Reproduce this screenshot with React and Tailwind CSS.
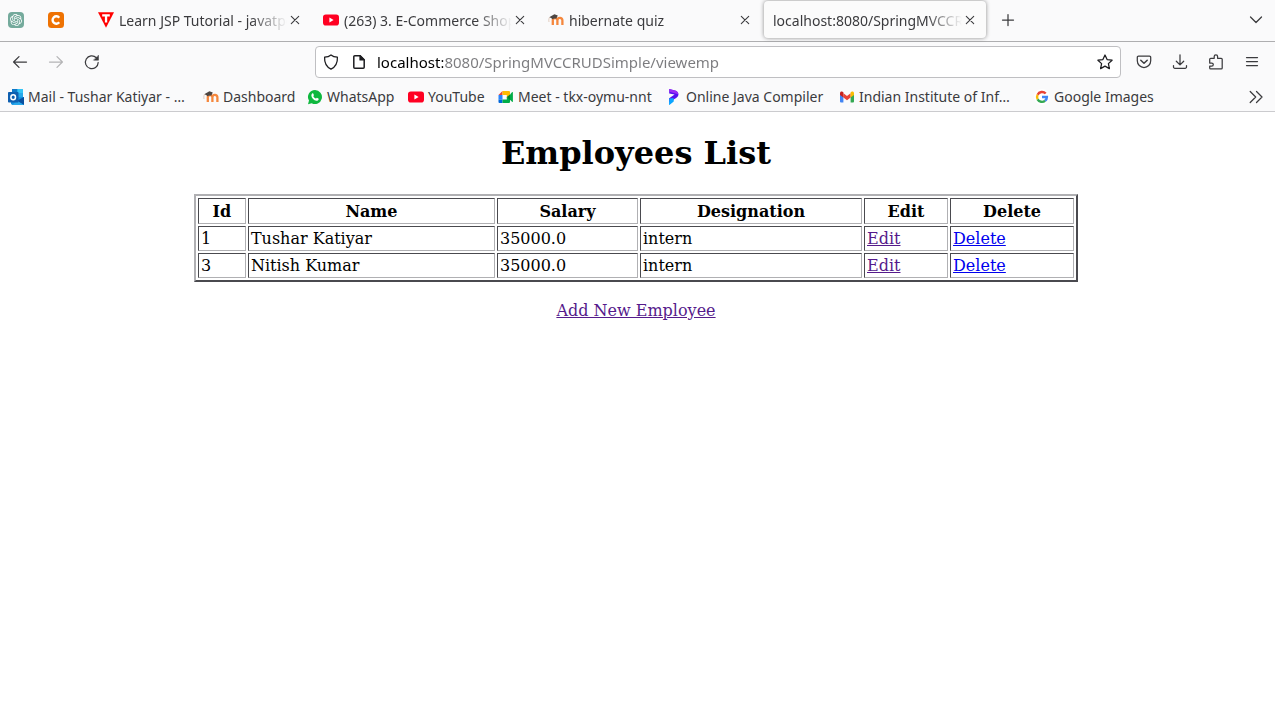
import { SiOpenai } from 'react-icons/si';

function Youtube() {
  return (
    <svg viewBox="0 0 16 16" className="size-4 shrink-0" aria-hidden="true">
      <rect x="0" y="2.5" width="16" height="11" rx="2.8" fill="#ff0022" />
      <path d="M6.4 5.6v4.8L10.6 8z" fill="#fff" />
    </svg>
  );
}

function Moodle() {
  return (
    <svg viewBox="0 0 16 16" className="size-4 shrink-0" aria-hidden="true">
      <path
        d="M4.8 13V8.4a1.9 1.9 0 0 1 4.6-.2V13M9.4 13V8.200a2.500 2.500 0 0 1 5 .2V13"
        fill="none"
        stroke="#f5873d"
        strokeWidth="2.3"
      />
      <path d="M1.2 5.200 6.400 2.200l3.400 1.300-1.600 3.200c-1.300-.5-2.700-.3-3.800.6L3.200 6z" fill="#4d4643" />
      <path d="M1.500 5.300C.7 7 .7 8.600 1 10" fill="none" stroke="#d9b9a5" strokeWidth=".7" />
    </svg>
  );
}

function Tpoint() {
  return (
    <svg viewBox="0 0 16 16" className="size-4 shrink-0" aria-hidden="true">
      <path d="M0 .3h16L8 15.700z" fill="#f00" />
      <path d="M4.200 2.200h7.600v2.200H9.200v6H6.900v-6H4.200z" fill="#fff" />
    </svg>
  );
}

function Outlook() {
  return (
    <svg viewBox="0 0 16 16" className="size-4 shrink-0" aria-hidden="true">
      <rect x="4" y="0" width="11" height="11" fill="#28a8ea" />
      <path d="M4 0h5.500v4H4z" fill="#0f78c8" />
      <path d="M9.500 0H15v4H9.500z" fill="#35c4f5" />
      <path d="M3 8.500 16 8v8H4.500L3 15z" fill="#1490df" />
      <path d="M16 8v8l-7-4.200z" fill="#0a50a0" />
      <path d="M4.500 16H16l-7-4.200z" fill="#28a8ea" />
      <rect x="0" y="3" width="10.500" height="10.500" rx=".8" fill="#0f5fb0" />
      <ellipse cx="5.200" cy="8.200" rx="2.300" ry="2.500" fill="none" stroke="#fff" strokeWidth="1.500" />
    </svg>
  );
}

function Whatsapp() {
  return (
    <svg viewBox="0 0 16 16" className="size-4 shrink-0" aria-hidden="true">
      <path d="M8 1a7 7 0 1 1-3.300 13.200L1 15.200l1-3.600A7 7 0 0 1 8 1z" fill="#0fb83f" />
      <path
        d="M5.700 4.300c.3 0 .5 0 .6.4l.6 1.400c.1.300-.6 1-.6 1.200.6 1.100 1.400 1.900 2.500 2.300.3.100.8-.9 1.100-.8l1.500.7c.4.200.3.600.2 1-.3.900-1.400 1.300-2.200 1.200C6.900 11.400 4.700 9.200 4.400 7c-.1-1.100.4-2.500 1.300-2.700z"
        fill="#fff"
      />
    </svg>
  );
}

function Meet() {
  return (
    <svg viewBox="0 0 16 16" className="size-4 shrink-0" aria-hidden="true">
      <path d="M4.500 2v4H.5z" fill="#ea4335" />
      <path d="M.5 6h4v4.500h-4z" fill="#2684fc" />
      <path d="M.5 10.500h4V14h-3a1 1 0 0 1-1-1z" fill="#0066da" />
      <path d="M4.500 2H11a1 1 0 0 1 1 1v3.500L8.800 9V6H4.500z" fill="#ffba00" />
      <path d="M4.500 10.500h4.300V8L12 9.600V13a1 1 0 0 1-1 1H4.500z" fill="#00ac47" />
      <path d="M8.800 8 12 5.400V11z" fill="#00832d" />
      <path d="m12 5.400 2-2.200c.4-.3.900-.1.900.4v8.800c0 .5-.5.700-.9.400l-2-2.100z" fill="#00ac47" />
    </svg>
  );
}

function Programiz() {
  return (
    <svg viewBox="0 0 16 16" className="size-4 shrink-0" aria-hidden="true">
      <path d="M3.200 9.500 7.500 8.600v4L3.200 16z" fill="#0ba5ff" />
      <path d="M3.200 0 9 1.600c4.400 1.300 4.400 5.600 1.200 7.400L3.200 13V9.300L8.600 5.600 3.200 4.500z" fill="#5510ee" />
      <path d="M3.200 0 9 1.600c2.200.6 3.300 2 3.200 3.600L3.200 2.800z" fill="#9b2cf5" />
      <path d="M3.200 9.500 7.500 9v3.500L3.200 16z" fill="#0ba5ff" />
    </svg>
  );
}

function Gmail() {
  return (
    <svg viewBox="0 0 16 16" className="size-4 shrink-0" aria-hidden="true">
      <path d="M1 4.500 4.400 7v6.500H2a1 1 0 0 1-1-1z" fill="#4285f4" />
      <path d="M15 4.500 11.600 7v6.500H14a1 1 0 0 0 1-1z" fill="#34a853" />
      <path d="M4.400 4.300 8 7l3.600-2.700v4.200L8 11.200 4.400 8.500z" fill="#ea4335" />
      <path d="M1 4.200c0-1.600 1.600-2.200 2.800-1.300l.6.400v5.200L1 6z" fill="#c5221f" />
      <path d="M15 4.200c0-1.600-1.600-2.200-2.800-1.300l-.6.400v5.200L15 6z" fill="#fbbc04" />
    </svg>
  );
}

function Google() {
  return (
    <svg viewBox="0 0 16 16" className="size-4 shrink-0" aria-hidden="true">
      <circle cx="8" cy="8" r="8" fill="#fff" />
      <g fill="none" strokeWidth="2.400">
        <path d="M11.700 4.500A5 5 0 0 0 3.600 5.700" stroke="#ea4335" />
        <path d="M3.600 5.700a5 5 0 0 0 0 4.600" stroke="#fbbc05" />
        <path d="M3.600 10.300a5 5 0 0 0 7.500 1.500" stroke="#34a853" />
        <path d="M11.100 11.800A4.800 4.800 0 0 0 12.900 8H8" stroke="#4285f4" />
      </g>
    </svg>
  );
}

function Line({ children, className = '' }) {
  return (
    <svg
      viewBox="0 0 16 16"
      className={`size-4 shrink-0 ${className}`}
      fill="none"
      stroke="currentColor"
      strokeWidth="1.250"
      strokeLinecap="round"
      strokeLinejoin="round"
      aria-hidden="true"
    >
      {children}
    </svg>
  );
}

function ToolButton({ label, children, className = '' }) {
  return (
    <button type="button" aria-label={label} className={`flex h-8 w-9 items-center justify-center ${className}`}>
      {children}
    </button>
  );
}

const tabs = [
  { title: 'Learn JSP Tutorial - javatpoint', icon: <Tpoint /> },
  { title: '(263) 3. E-Commerce Shopping', icon: <Youtube /> },
  { title: 'hibernate quiz', icon: <Moodle /> },
  { title: 'localhost:8080/SpringMVCCRUD', active: true },
];

const bookmarks = [
  { title: 'Mail - Tushar Katiyar - …', icon: <Outlook />, width: 'w-[163px]' },
  { title: 'Dashboard', icon: <Moodle />, width: 'w-[72px]' },
  { title: 'WhatsApp', icon: <Whatsapp />, width: 'w-[69px]' },
  { title: 'YouTube', icon: <Youtube />, width: 'w-[58px]' },
  { title: 'Meet - tkx-oymu-nnt', icon: <Meet />, width: 'w-[136px]' },
  { title: 'Online Java Compiler', icon: <Programiz />, width: 'w-[141px]' },
  { title: 'Indian Institute of Inf…', icon: <Gmail />, width: 'w-[163px]' },
  { title: 'Google Images', icon: <Google />, width: 'w-[100px]' },
];

const employees = [
  { id: 1, name: 'Tushar Katiyar', salary: '35000.0', designation: 'intern' },
  { id: 3, name: 'Nitish Kumar', salary: '35000.0', designation: 'intern' },
];

const columns = [
  { title: 'Id', width: 'w-[48px]' },
  { title: 'Name', width: 'w-[247px]' },
  { title: 'Salary', width: 'w-[141px]' },
  { title: 'Designation', width: 'w-[222px]' },
  { title: 'Edit', width: 'w-[84px]' },
  { title: 'Delete', width: 'w-[124px]' },
];

const cell = 'border border-t-[#4a4a4f] border-l-[#4a4a4f] border-r-[#b0b0b3] border-b-[#b0b0b3] px-0.5 pb-0.5';

function Tab({ title, icon, active }) {
  return (
    <div className="h-[41px] w-[225px] min-w-0 p-px">
      <div
        className={`mr-px flex h-[37px] items-center rounded pr-2 pl-[9px] ${
          active ? 'bg-[#fbfbfb] shadow-[0_0_4px_rgba(0,0,0,0.45)]' : ''
        }`}
      >
        <button type="button" className="flex min-w-0 flex-1 items-center gap-[5px] text-left">
          {icon}
          <span className="flex-1 overflow-hidden pt-0.5 whitespace-nowrap [mask-image:linear-gradient(to_left,transparent,black_36px)]">
            {title}
          </span>
        </button>
        <button type="button" aria-label={`Close ${title}`} className="flex w-4 justify-center">
          <Line>
            <path d="M4.300 4.300l7.400 7.400M11.700 4.300l-7.400 7.400" strokeWidth="1.100" />
          </Line>
        </button>
      </div>
    </div>
  );
}

export default function App() {
  return (
    <div className="min-h-screen bg-white">
      <header className="bg-[#fafafb] font-['Noto_Sans','Open_Sans',sans-serif] text-sm text-[#3b3b3e]">
        <nav aria-label="Tabs" className="flex h-[42px] border-b border-[#aeaeb0]">
          <button type="button" aria-label="ChatGPT" className="flex h-10 w-10 items-center pl-2">
            <span className="flex size-4 items-center justify-center rounded-sm bg-[#74aa9c] text-white">
              <SiOpenai className="size-3" />
            </span>
          </button>
          <button type="button" aria-label="Codechef" className="mr-2 flex h-10 w-10 items-center pl-2">
            <svg viewBox="0 0 16 16" className="size-4" aria-hidden="true">
              <rect width="16" height="16" rx="3.500" fill="#ee7203" />
              <path d="M11.200 5.700A3.700 3.700 0 1 0 11.200 10.300" fill="none" stroke="#fff" strokeWidth="2.400" />
            </svg>
          </button>
          {tabs.map((tab) => (
            <Tab key={tab.title} {...tab} />
          ))}
          <ToolButton label="New tab" className="ml-0.5 h-10">
            <Line>
              <path d="M8 2.500v11M2.500 8h11" />
            </Line>
          </ToolButton>
          <ToolButton label="List all tabs" className="mr-px ml-auto h-10">
            <Line>
              <path d="m2.500 5 5.500 5.500L13.500 5" />
            </Line>
          </ToolButton>
        </nav>

        <div className="flex h-10 items-center pr-[5px]">
          <div className="flex w-[315px] shrink-0 pl-0.5">
            <ToolButton label="Back">
              <Line>
                <path d="M14.500 8H1.800M7 2.600 1.600 8 7 13.400" />
              </Line>
            </ToolButton>
            <ToolButton label="Forward" className="text-[#b4b4b6]">
              <Line>
                <path d="M1.500 8h12.700M9 2.600 14.400 8 9 13.400" />
              </Line>
            </ToolButton>
            <ToolButton label="Reload">
              <Line>
                <path d="M14.200 8.500A6.400 6.400 0 1 1 12.300 3.700" />
                <path d="M14.500 1.500v4.700H9.800z" fill="currentColor" strokeWidth=".5" />
              </Line>
            </ToolButton>
          </div>
          <div className="flex h-8 flex-1 items-center rounded border border-[#bfbfc2] bg-white px-[7px] text-[#1d1d20]">
            <Line>
              <path d="M8 .9c1.800 1.500 4 2.100 6.400 2.300.3 5.300-1.600 9.500-6.400 11.900C3.200 12.700 1.300 8.500 1.600 3.200 4 3 6.200 2.400 8 .9z" />
            </Line>
            <Line className="ml-3">
              <path d="M3.800 1.700h5.400l4 4v7.600a1 1 0 0 1-1 1H3.800a1 1 0 0 1-1-1V2.700a1 1 0 0 1 1-1z" strokeWidth="1.500" />
              <path d="M9 1.700v4.200h4.200z" fill="currentColor" />
            </Line>
            <input
              aria-label="Address"
              defaultValue="localhost:8080/SpringMVCCRUDSimple/viewemp"
              className="mx-2.5 h-7 min-w-0 flex-1 bg-linear-to-r from-black from-[66px] to-[#7b7b7e] to-[66px] bg-clip-text text-[15px] text-transparent outline-none"
            />
            <button type="button" aria-label="Bookmark this page">
              <Line>
                <path d="m8 1 2.100 4.600 5 .6-3.700 3.400 1 5L8 12.100l-4.400 2.500 1-5L.9 6.200l5-.6z" />
              </Line>
            </button>
          </div>
          <div className="flex pl-[5px]">
            <ToolButton label="Save to Pocket">
              <Line>
                <path d="M2.500 2.200h11a1.200 1.200 0 0 1 1.200 1.200v3.400a6.700 6.700 0 0 1-13.400 0V3.400a1.200 1.200 0 0 1 1.200-1.200z" />
                <path d="M4.800 6.200 8 9.200l3.200-3" strokeWidth="1.500" />
              </Line>
            </ToolButton>
            <ToolButton label="Downloads">
              <Line>
                <path d="M8 .8v9.900M4.300 7.200 8 10.900l3.700-3.700M1.500 11.500v1.400A1.400 1.400 0 0 0 2.900 14.300h10.200a1.400 1.400 0 0 0 1.400-1.400v-1.400" />
              </Line>
            </ToolButton>
            <ToolButton label="Extensions">
              <Line>
                <path d="M1.700 7V5.300a1 1 0 0 1 1-1h3.500V2.600a1.700 1.700 0 0 1 3.400 0v1.700h3.600a1 1 0 0 1 1 1v8.600a1 1 0 0 1-1 1H2.700a1 1 0 0 1-1-1v-1.700h2a1.600 1.600 0 0 0 0-3.200h-2z" />
              </Line>
            </ToolButton>
            <ToolButton label="Menu">
              <Line>
                <path d="M2.500 3.500h11M2.500 7.500h11M2.500 11.500h11" />
              </Line>
            </ToolButton>
          </div>
        </div>

        <nav aria-label="Bookmarks" className="flex h-[30px] items-center gap-3 border-b border-[#cbcbce] pl-2">
          {bookmarks.map(({ title, icon, width }) => (
            <a key={title} href="#" className="flex shrink-0 items-center gap-1 whitespace-nowrap">
              {icon}
              <span className={width}>{title}</span>
            </a>
          ))}
          <ToolButton label="More bookmarks" className="mr-px ml-auto">
            <Line>
              <path d="m2.200 2.500 5.500 5.500-5.500 5.500M8.500 2.500 14 8l-5.500 5.500" />
            </Line>
          </ToolButton>
        </nav>
      </header>

      <main className="flex flex-col items-center pt-[21px] pr-[11px] pl-2 font-['DejaVu_Serif',serif] text-base text-black">
        <h1 className="text-[32px] leading-10 font-bold">Employees List</h1>
        <table className="mt-[21px] w-[calc(70%+5px)] table-fixed border-separate border-spacing-0.5 border-2 border-t-[#b0b0b3] border-r-[#4a4a4f] border-b-[#4a4a4f] border-l-[#b0b0b3] leading-[19px]">
          <thead>
            <tr>
              {columns.map(({ title, width }) => (
                <th key={title} className={`${cell} ${width} pt-[3px] font-bold`}>
                  {title}
                </th>
              ))}
            </tr>
          </thead>
          <tbody>
            {employees.map(({ id, name, salary, designation }) => (
              <tr key={id} className="*:pt-0.5">
                <td className={cell}>{id}</td>
                <td className={cell}>{name}</td>
                <td className={cell}>{salary}</td>
                <td className={cell}>{designation}</td>
                <td className={cell}>
                  <a href="#" className="text-[#551a8b] underline">
                    Edit
                  </a>
                </td>
                <td className={cell}>
                  <a href="#" className="text-[#0000ee] underline">
                    Delete
                  </a>
                </td>
              </tr>
            ))}
          </tbody>
        </table>
        <a href="#" className="mt-[19px] leading-5 text-[#551a8b] underline">
          Add New Employee
        </a>
      </main>
    </div>
  );
}
